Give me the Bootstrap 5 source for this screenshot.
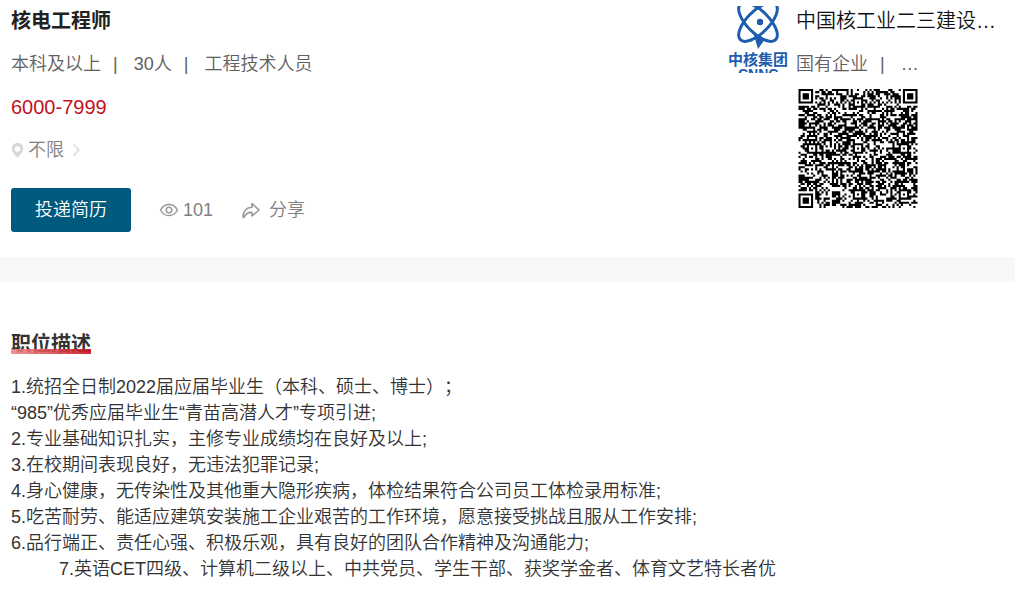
<!DOCTYPE html>
<html lang="zh-CN">
<head>
<meta charset="utf-8">
<meta name="viewport" content="width=device-width, initial-scale=1">
<title>核电工程师</title>
<link rel="stylesheet" href="https://cdn.jsdelivr.net/npm/bootstrap@5.3.0/dist/css/bootstrap.min.css">
<style>
  body { font-family: "Liberation Sans", "Noto Sans CJK SC", sans-serif; font-size: 18px; font-weight: 350; line-height: 26px; color: #333; background: #fff; text-spacing-trim: space-all; }
  .job-title { font-size: 20px; line-height: 30px; font-weight: 700; color: #222; }
  .meta { color: #606060; }
  .pay { font-size: 20px; line-height: 30px; color: #c1121f; }
  .soft, .soft:hover { color: #808080; }
  .gap-below { margin-bottom: 15px; }
  .apply { width: 120px; height: 44px; font-size: 18px; font-weight: 350; line-height: 26px; border-radius: 3px;
    --bs-btn-color: #fff; --bs-btn-bg: #005a7e; --bs-btn-hover-color: #fff; --bs-btn-hover-bg: #004b69; }
  .pad { padding-left: 11px; padding-right: 11px; }
  .header-block { padding-top: 6px; padding-bottom: 25px; }
  .company { width: 287px; }
  .company-name, .company-name:hover { font-size: 20px; line-height: 30px; color: #111; }
  .company .meta { margin-bottom: 12px; }
  .actions { margin-top: 25px; }
  .band { height: 25px; background: #f8f8f8; }
  .desc { padding-top: 47px; }
  .desc-title { font-size: 20px; line-height: 30px; font-weight: 700; color: #333; }
  .desc-title::after { content: ""; position: absolute; left: 0; right: 0; bottom: 5px; height: 5px;
    background: linear-gradient(90deg, rgba(238,130,130,.85), rgba(200,22,34,.92)); }
  .last-line { padding-left: 48px; }
</style>
</head>
<body>
<header class="header-block pad pe-0 d-flex justify-content-between">
  <section class="flex-grow-1">
    <h1 class="job-title gap-below">核电工程师</h1>
    <div class="meta d-flex gap-below">
      <span>本科及以上</span><span class="ms-2 ps-1 me-3">|</span><span>30人</span><span class="ms-2 ps-1 me-3">|</span><span>工程技术人员</span>
    </div>
    <div class="pay gap-below">6000-7999</div>
    <div class="d-flex">
      <a href="#" class="soft text-decoration-none d-flex align-items-center">
        <svg class="me-1" width="13" height="17" viewBox="0 0 13 17" aria-hidden="true"><path d="M6.500 1C3.200 1 .8 3.400.8 6.600c0 3.800 3.700 7 5.700 9.400 2-2.400 5.700-5.600 5.700-9.400C12.200 3.400 9.800 1 6.500 1zm0 3.200a2.800 2.800 0 1 1 0 5.600 2.800 2.800 0 0 1 0-5.600z" fill="#d8d8d8" fill-rule="evenodd"/></svg>
        <span>不限</span>
        <svg class="ms-2" width="8" height="14" viewBox="0 0 8 14" fill="none" stroke="#dadada" stroke-width="1.600" aria-hidden="true"><path d="M1.500 1.500 6.800 7l-5.300 5.500"/></svg>
      </a>
    </div>
    <div class="actions d-flex align-items-center">
      <button type="button" class="btn apply border-0 p-0">投递简历</button>
      <span class="soft d-flex align-items-center ms-4 ps-1">
        <svg class="me-1" width="20" height="14" viewBox="0 0 19 14" fill="none" stroke="#999" stroke-width="1.500" aria-hidden="true"><path d="M1 7c2-3.700 5-5.600 8.500-5.600S16 3.300 18 7c-2 3.700-5 5.600-8.500 5.600S3 10.700 1 7z"/><circle cx="9.500" cy="7" r="2.800"/></svg>101</span>
      <a href="#" class="soft d-flex align-items-center text-decoration-none ms-4 ps-1">
        <svg class="me-2" width="20" height="17" viewBox="0 0 19 17" fill="none" stroke="#999" stroke-width="1.600" stroke-linejoin="round" aria-hidden="true"><path d="M10.500 1.500 17.500 8l-7 6v-3.600c-3.500-.3-6.200 1.200-7.700 4.600L1.500 15.500c.1-6.200 3-10 9-10.200z"/></svg>分享</a>
    </div>
  </section>
  <aside class="company d-flex flex-shrink-0 gap-2">
    <svg width="60" height="67" viewBox="0 0 60 67" class="flex-shrink-0" role="img" aria-label="中核集团">
      <g fill="none" stroke="#1d5cae" stroke-width="3">
        <ellipse cx="30" cy="16" rx="11" ry="25" transform="rotate(45 30 16)"/>
        <ellipse cx="30" cy="16" rx="11" ry="25" transform="rotate(-45 30 16)"/>
      </g>
      <circle cx="32" cy="16" r="3.200" fill="#1d5cae"/>
      <path d="M25 26 37 33 30 43z" fill="#1d5cae"/>
      <text x="0" y="59" font-size="15" font-weight="700" fill="#1d5cae">中核集团</text>
      <text x="10" y="73" font-size="14" font-weight="700" fill="#1d5cae">CNNC</text>
    </svg>
    <div class="flex-grow-1">
      <a href="#" class="company-name d-block text-decoration-none gap-below">中国核工业二三建设…</a>
      <div class="meta d-flex"><span>国有企业</span><span class="ms-2 ps-1 me-3">|</span><span>…</span></div>
      <svg id="qr" class="d-block" width="124" height="119" viewBox="0 0 59 57" role="img" aria-label="二维码"><path fill="#000"/></svg>
    </div>
  </aside>
</header>
<div class="band"></div>
<main class="desc pad">
  <h2 class="desc-title position-relative d-inline-block gap-below">职位描述</h2>
  <div>1.统招全日制2022届应届毕业生（本科、硕士、博士）；</div>
  <div>“985”优秀应届毕业生“青苗高潜人才”专项引进;</div>
  <div>2.专业基础知识扎实，主修专业成绩均在良好及以上;</div>
  <div>3.在校期间表现良好，无违法犯罪记录;</div>
  <div>4.身心健康，无传染性及其他重大隐形疾病，体检结果符合公司员工体检录用标准;</div>
  <div>5.吃苦耐劳、能适应建筑安装施工企业艰苦的工作环境，愿意接受挑战且服从工作安排;</div>
  <div>6.品行端正、责任心强、积极乐观，具有良好的团队合作精神及沟通能力;</div>
  <div class="last-line">7.英语CET四级、计算机二级以上、中共党员、学生干部、获奖学金者、体育文艺特长者优</div>
</main>
<script src="https://cdn.jsdelivr.net/npm/bootstrap@5.3.0/dist/js/bootstrap.bundle.min.js"></script>
<script>
  // Version 10 code: 57 modules, finders in three corners, alignment marks at 6, 28 and 50.
  const N = 57;
  let seed = 20221;
  const rnd = () => (seed = (seed * 1103515245 + 12345) % 2147483648) / 2147483648;
  const m = Array.from({ length: N }, () => Array.from({ length: N }, () => rnd() < 0.54));
  for (let i = 0; i < N; i++) m[6][i] = m[i][6] = i % 2 === 0;
  const rings = (cx, cy, r, light) => {
    for (let y = -r; y <= r; y++) for (let x = -r; x <= r; x++) {
      if (m[cy + y] && cx + x >= 0 && cx + x < N) m[cy + y][cx + x] = !light.includes(Math.max(Math.abs(x), Math.abs(y)));
    }
  };
  [[3, 3], [53, 3], [3, 53]].forEach(([x, y]) => rings(x, y, 4, [2, 4]));
  [[28, 6], [6, 28], [28, 28], [50, 28], [28, 50], [50, 50]].forEach(([x, y]) => rings(x, y, 2, [1]));
  let d = '';
  m.forEach((row, y) => row.forEach((on, x) => { if (on) d += `M${x + 1} ${y}h1v1h-1z`; }));
  document.querySelector('#qr path').setAttribute('d', d);
</script>
</body>
</html>
